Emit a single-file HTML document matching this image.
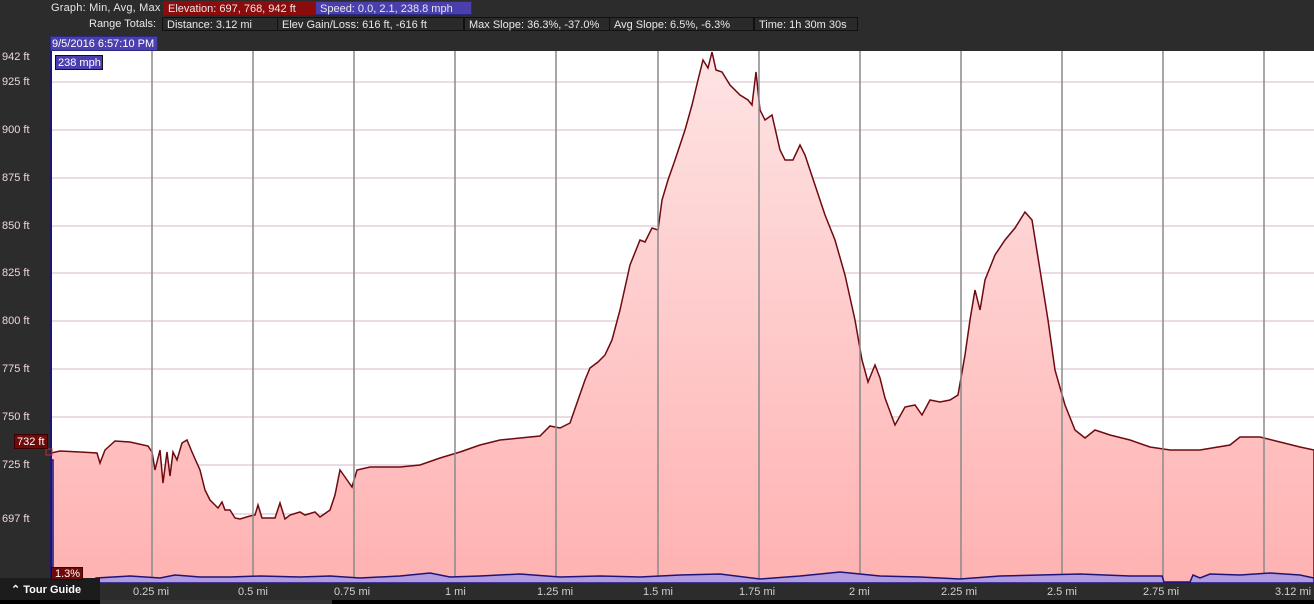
<!DOCTYPE html>
<html><head><meta charset="utf-8"><style>
body{margin:0;width:1314px;height:604px;background:#2c2c2c;overflow:hidden;font-family:"Liberation Sans",sans-serif;font-size:11px;color:#e8e8e8;position:relative}
.a{position:absolute;white-space:nowrap;line-height:14px}
.box{position:absolute;height:14px;line-height:14px;padding-left:4px;box-sizing:border-box;border:1px solid #111;background:#2a2a2a}
.yl{position:absolute;left:2px;color:#f0d8d8;font-size:11px}
.xl{position:absolute;top:586px;color:#cfcfcf;font-size:11px}
</style></head><body>
<div class="a" style="left:51px;top:1px;letter-spacing:0.2px">Graph: Min, Avg, Max</div>
<div class="box" style="left:163px;top:1px;width:152px;background:#8a0c0c;border-color:#8a0c0c">Elevation: 697, 768, 942 ft</div>
<div class="box" style="left:315px;top:1px;width:157px;background:#4b3fae;border-color:#2a2a80">Speed: 0.0, 2.1, 238.8 mph</div>
<div class="a" style="left:89px;top:17px">Range Totals:</div>
<div class="box" style="left:162px;top:17px;width:116px">Distance: 3.12 mi</div>
<div class="box" style="left:277px;top:17px;width:187px">Elev Gain/Loss: 616 ft, -616 ft</div>
<div class="box" style="left:464px;top:17px;width:146px">Max Slope: 36.3%, -37.0%</div>
<div class="box" style="left:609px;top:17px;width:145px">Avg Slope: 6.5%, -6.3%</div>
<div class="box" style="left:754px;top:17px;width:104px">Time: 1h 30m 30s</div>
<div class="box" style="left:50px;top:36px;width:108px;height:15px;background:#4b3fae;border-color:#2a2a80;padding-left:1px;color:#fff">9/5/2016 6:57:10 PM</div>
<svg style="position:absolute;left:0;top:0" width="1314" height="604">
<defs><linearGradient id="g2" x1="0" y1="50" x2="0" y2="583" gradientUnits="userSpaceOnUse"><stop offset="0" stop-color="#fee4e4"/><stop offset="1" stop-color="#ffb2b2"/></linearGradient></defs>
<rect x="51" y="51" width="1263" height="532" fill="#fff"/>
<g stroke="#e2d2da" stroke-width="1.5">
<line x1="51" x2="1314" y1="82" y2="82"/><line x1="51" x2="1314" y1="130" y2="130"/><line x1="51" x2="1314" y1="178" y2="178"/><line x1="51" x2="1314" y1="226" y2="226"/><line x1="51" x2="1314" y1="273" y2="273"/><line x1="51" x2="1314" y1="321" y2="321"/><line x1="51" x2="1314" y1="369" y2="369"/><line x1="51" x2="1314" y1="417" y2="417"/><line x1="51" x2="1314" y1="465" y2="465"/><line x1="51" x2="1314" y1="514" y2="514"/><line x1="51" x2="1314" y1="526" y2="526"/>
</g>
<path fill="url(#g2)" stroke="#6e0a10" stroke-width="1.5" d="M51,453 L60,451 80,452 97,453 100,463 105,450 115,441 130,442 148,446 152,452 155,470 160,450 163,483 167,452 170,476 173,452 177,460 182,443 187,440 192,452 200,470 205,490 210,500 215,505 218,508 222,502 225,510 230,510 235,518 240,519 250,516 255,515 258,505 262,518 275,518 280,503 285,519 290,515 300,512 305,515 315,512 320,517 330,510 335,495 340,470 345,477 352,487 357,470 370,467 400,467 420,465 440,458 460,452 480,445 500,440 520,438 540,436 550,426 560,428 570,423 578,400 585,380 590,368 598,362 605,355 612,340 620,310 630,265 640,240 645,242 652,228 658,230 662,200 668,180 675,160 685,130 692,105 698,80 703,60 708,68 712,52 716,70 722,72 730,85 740,95 748,100 752,105 756,72 760,110 765,120 772,115 780,150 785,160 793,160 800,145 805,155 815,185 825,215 835,240 845,275 855,320 862,360 868,382 875,365 880,378 885,398 895,425 905,407 915,405 922,415 930,400 940,402 950,400 958,395 965,355 970,320 975,290 980,310 985,280 995,255 1005,240 1015,228 1025,212 1032,220 1040,270 1048,320 1055,370 1065,405 1075,430 1085,438 1095,430 1110,435 1130,440 1150,447 1170,450 1200,450 1230,445 1240,437 1260,437 1280,442 1300,447 1314,450 L1314,583 L51,583 Z"/>
<g stroke="#8a8a8a" stroke-width="1.5">
<line x1="152" x2="152" y1="51" y2="583"/><line x1="253" x2="253" y1="51" y2="583"/><line x1="354" x2="354" y1="51" y2="583"/><line x1="455" x2="455" y1="51" y2="583"/><line x1="556" x2="556" y1="51" y2="583"/><line x1="658" x2="658" y1="51" y2="583"/><line x1="759" x2="759" y1="51" y2="583"/><line x1="860" x2="860" y1="51" y2="583"/><line x1="961" x2="961" y1="51" y2="583"/><line x1="1062" x2="1062" y1="51" y2="583"/><line x1="1163" x2="1163" y1="51" y2="583"/><line x1="1264" x2="1264" y1="51" y2="583"/>
</g>
<path fill="#b39be0" stroke="#1e1478" stroke-width="1.5" d="M51,583 L51,460 53,460 53,583 M96,578 L130,576 160,578 175,575 200,577 230,577 260,576 300,577 330,576 360,578 400,576 430,573 450,577 480,576 520,574 560,577 600,576 640,577 680,575 720,574 760,579 800,576 840,572 880,576 920,577 960,579 1000,576 1040,575 1080,574 1130,576 1162,576 1164,582 1190,582 1193,575 1200,578 1210,574 1240,575 1270,573 1300,575 1314,578 L1314,583 L96,583 Z"/>
<line x1="51" x2="51" y1="51" y2="583" stroke="#1e1478" stroke-width="2"/>
<rect x="46" y="449" width="6" height="6" fill="none" stroke="#c03030"/>
<rect x="0" y="583" width="1314" height="21" fill="#2c2c2c"/>
<rect x="0" y="600" width="1314" height="4" fill="#000"/>
<rect x="0" y="578" width="100" height="22" fill="#1c1c1c"/>
<rect x="100" y="600" width="232" height="4" fill="#333"/>
</svg>
<div class="yl" style="top:51px">942 ft</div>
<div class="yl" style="top:76px">925 ft</div>
<div class="yl" style="top:124px">900 ft</div>
<div class="yl" style="top:172px">875 ft</div>
<div class="yl" style="top:220px">850 ft</div>
<div class="yl" style="top:267px">825 ft</div>
<div class="yl" style="top:315px">800 ft</div>
<div class="yl" style="top:363px">775 ft</div>
<div class="yl" style="top:411px">750 ft</div>
<div class="yl" style="top:459px">725 ft</div>
<div class="yl" style="top:513px">697 ft</div>
<div class="box" style="left:14px;top:434px;width:34px;height:15px;background:#6e0a0a;border-color:#3a0000;color:#fff;padding-left:2px">732 ft</div>
<div class="box" style="left:55px;top:55px;width:48px;height:15px;background:#4b3fae;border-color:#111;color:#fff;padding-left:2px">238 mph</div>
<div class="box" style="left:51px;top:567px;width:32px;height:13px;line-height:12px;background:#6e0a0a;border-color:#3a0000;color:#fff;padding-left:3px">1.3%</div>
<div class="a" style="left:11px;top:583px;color:#fff;font-weight:bold;font-size:11px">⌃ Tour Guide</div>
<div class="xl" style="left:133px">0.25 mi</div>
<div class="xl" style="left:238px">0.5 mi</div>
<div class="xl" style="left:334px">0.75 mi</div>
<div class="xl" style="left:445px">1 mi</div>
<div class="xl" style="left:537px">1.25 mi</div>
<div class="xl" style="left:643px">1.5 mi</div>
<div class="xl" style="left:739px">1.75 mi</div>
<div class="xl" style="left:849px">2 mi</div>
<div class="xl" style="left:941px">2.25 mi</div>
<div class="xl" style="left:1047px">2.5 mi</div>
<div class="xl" style="left:1143px">2.75 mi</div>
<div class="xl" style="left:1275px">3.12 mi</div>
</body></html>
